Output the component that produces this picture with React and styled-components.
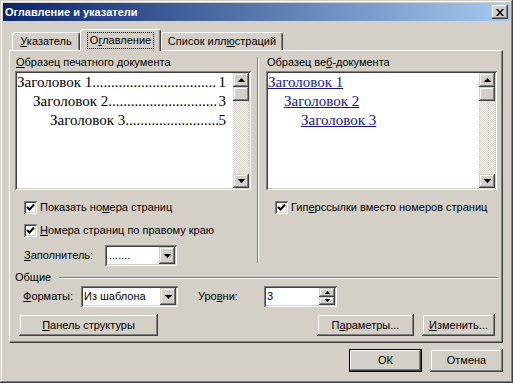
import React from "react";
import styled, { createGlobalStyle, css } from "styled-components";

const FACE = "#d4d0c8";
const SHADOW = "#808080";
const DARK = "#404040";

const GlobalStyle = createGlobalStyle`
  * { box-sizing: border-box; }
  html, body { margin: 0; padding: 0; background: ${FACE}; }
  body {
    font-family: "Liberation Sans", Arial, sans-serif;
    font-size: 11px;
    line-height: 13px;
    color: #000;
  }
`;

const raised = css`
  background: ${FACE};
  box-shadow: inset -1px -1px ${DARK}, inset 1px 1px ${FACE},
    inset -2px -2px ${SHADOW}, inset 2px 2px #fff;
`;

const raisedThin = css`
  background: ${FACE};
  box-shadow: inset -1px -1px ${DARK}, inset 1px 1px #fff,
    inset -2px -2px ${SHADOW};
`;

const sunken = css`
  background: #fff;
  box-shadow: inset 1px 1px ${SHADOW}, inset -1px -1px #fff,
    inset 2px 2px ${DARK}, inset -2px -2px ${FACE};
`;

const Window = styled.div`
  width: 513px;
  height: 383px;
  padding: 3px;
  background: ${FACE};
  box-shadow: inset -1px -1px ${DARK}, inset 1px 1px ${FACE},
    inset -2px -2px ${SHADOW}, inset 2px 2px #fff;
  display: flex;
  flex-direction: column;
`;

const TitleBar = styled.div`
  height: 18px;
  display: flex;
  align-items: center;
  justify-content: space-between;
  padding: 0 2px 0 2px;
  background: linear-gradient(to right, #0a246a, #a6caf0);
  color: #fff;
  font-weight: bold;
`;

const CloseButton = styled.div`
  width: 16px;
  height: 14px;
  ${raisedThin}
  display: flex;
  align-items: center;
  justify-content: center;
  padding-right: 1px;
`;

const Content = styled.div`
  flex: 1;
  display: flex;
  flex-direction: column;
  padding: 8px 7px 0 6px;
`;

const TabStrip = styled.div`
  height: 21px;
  display: flex;
  align-items: flex-end;
  padding-left: 3px;
`;

const Tab = styled.div`
  position: relative;
  z-index: ${(p) => (p.$active ? 1 : 0)};
  width: ${(p) => p.$w}px;
  height: ${(p) => (p.$active ? 22 : 18)}px;
  margin-bottom: ${(p) => (p.$active ? -1 : 0)}px;
  padding-top: ${(p) => (p.$active ? 3 : 2)}px;
  background: ${FACE};
  border-top: 1px solid #fff;
  border-left: 1px solid #fff;
  border-right: 1px solid ${DARK};
  border-radius: 3px 3px 0 0;
  box-shadow: inset -1px 0 ${SHADOW};
  display: flex;
  justify-content: center;
  align-items: flex-start;
`;

const FocusText = styled.span`
  padding: 1px 2px;
  outline: 1px dotted #000;
  outline-offset: 0;
`;

const PlainText = styled.span`
  padding: 0 2px;
`;

const Panel = styled.div`
  width: 494px;
  border-top: 1px solid #fff;
  border-left: 1px solid #fff;
  border-right: 1px solid ${DARK};
  border-bottom: 1px solid ${DARK};
  box-shadow: inset -1px -1px ${SHADOW};
  display: flex;
  flex-direction: column;
  padding-bottom: 6px;
`;

const Columns = styled.div`
  height: 216px;
  display: flex;
`;

const Column = styled.div`
  width: ${(p) => (p.$w ? `${p.$w}px` : "auto")};
  flex: ${(p) => (p.$w ? "none" : 1)};
  padding: 5px 0 0 ${(p) => p.$pl}px;
  display: flex;
  flex-direction: column;
`;

const VDivider = styled.div`
  width: 2px;
  margin: 6px 0 4px;
  border-left: 1px solid ${SHADOW};
  border-right: 1px solid #fff;
`;

const GroupLabel = styled.div`
  height: 13px;
  padding-left: 1px;
  margin-bottom: 2px;
`;

const PreviewBox = styled.div`
  width: ${(p) => p.$w}px;
  height: 119px;
  padding: 2px;
  ${sunken}
  display: flex;
`;

const PreviewContent = styled.div`
  flex: 1;
  min-width: 0;
  overflow: hidden;
  font-family: "Liberation Serif", "Times New Roman", serif;
  font-size: 15px;
  line-height: 19px;
`;

const TocRow = styled.div`
  display: flex;
  padding-left: ${(p) => p.$indent}px;
  padding-right: 7px;
  white-space: nowrap;
`;

const Leader = styled.span`
  flex: 1;
  min-width: 0;
  overflow: hidden;
`;

const WebRow = styled.div`
  padding-left: ${(p) => p.$indent}px;
  white-space: nowrap;
`;

const Link = styled.span`
  color: #14148c;
  text-decoration: underline;
`;

const ScrollBar = styled.div`
  width: 16px;
  display: flex;
  flex-direction: column;
`;

const ScrollBtn = styled.div`
  height: ${(p) => p.$h}px;
  ${raised}
  display: flex;
  align-items: center;
  justify-content: center;
`;

const Track = styled.div`
  flex: 1;
  background: repeating-conic-gradient(#fff 0 25%, ${FACE} 0 50%) 0 0 / 2px 2px;
`;

const CheckRow = styled.div`
  display: flex;
  align-items: center;
  gap: 3px;
  height: 13px;
  margin-top: ${(p) => p.$mt}px;
  padding-left: 9px;
  white-space: nowrap;
`;

const CheckBox = styled.div`
  width: 13px;
  height: 13px;
  flex: none;
  ${sunken}
  display: flex;
  align-items: center;
  justify-content: center;
`;

const FieldRow = styled.div`
  display: flex;
  align-items: center;
  height: 21px;
  margin-top: ${(p) => p.$mt}px;
  padding-left: ${(p) => p.$pl}px;
`;

const FieldLabel = styled.div`
  width: ${(p) => p.$w}px;
  margin-left: ${(p) => p.$ml || 0}px;
  flex: none;
  white-space: nowrap;
`;

const Combo = styled.div`
  width: ${(p) => p.$w}px;
  height: 21px;
  padding: 2px;
  ${sunken}
  display: flex;
`;

const ComboText = styled.div`
  flex: 1;
  padding-left: ${(p) => p.$pl ?? 1}px;
  display: flex;
  align-items: center;
  white-space: nowrap;
  overflow: hidden;
`;

const DropBtn = styled.div`
  width: 16px;
  ${raised}
  display: flex;
  align-items: center;
  justify-content: center;
`;

const SpinButtons = styled.div`
  width: 16px;
  display: flex;
  flex-direction: column;
`;

const SpinBtn = styled.div`
  flex: 1;
  ${raised}
  display: flex;
  align-items: center;
  justify-content: center;
`;

const GroupHeader = styled.div`
  height: 13px;
  margin-top: 4px;
  display: flex;
  align-items: center;
  padding-left: 5px;
`;

const HLine = styled.div`
  flex: 1;
  height: 2px;
  margin: 0 4px 0 8px;
  border-top: 1px solid ${SHADOW};
  border-bottom: 1px solid #fff;
`;

const ButtonRow = styled.div`
  display: flex;
  align-items: center;
  gap: 8px;
  margin-top: ${(p) => p.$mt}px;
  padding: ${(p) => p.$pad};
  justify-content: ${(p) => p.$justify || "flex-start"};
`;

const Spacer = styled.div`
  flex: 1;
`;

const Button = styled.button`
  width: ${(p) => p.$w}px;
  height: ${(p) => p.$h}px;
  font: inherit;
  color: #000;
  border: 0;
  padding: 0;
  margin: 0;
  ${raised}
  ${(p) =>
    p.$default &&
    css`
      box-shadow: inset 0 0 0 1px #000, inset -2px -2px ${DARK},
        inset 2px 2px #fff, inset -3px -3px ${SHADOW};
    `}
  display: flex;
  align-items: center;
  justify-content: center;
  white-space: nowrap;
`;

const Key = styled.span`
  text-decoration: underline;
`;

function Acc({ text }) {
  const i = text.indexOf("&");
  if (i < 0) return text;
  return (
    <>
      {text.slice(0, i)}
      <Key>{text[i + 1]}</Key>
      {text.slice(i + 2)}
    </>
  );
}

const ArrowDown = () => (
  <svg width="7" height="4" viewBox="0 0 7 4" shapeRendering="crispEdges">
    <path d="M0 0h7L3.5 4z" fill="#000" />
  </svg>
);
const ArrowUp = () => (
  <svg width="7" height="4" viewBox="0 0 7 4" shapeRendering="crispEdges">
    <path d="M0 4h7L3.5 0z" fill="#000" />
  </svg>
);
const SmallDown = () => (
  <svg width="5" height="3" viewBox="0 0 5 3" shapeRendering="crispEdges">
    <path d="M0 0h5L2.5 3z" fill="#000" />
  </svg>
);
const SmallUp = () => (
  <svg width="5" height="3" viewBox="0 0 5 3" shapeRendering="crispEdges">
    <path d="M0 3h5L2.5 0z" fill="#000" />
  </svg>
);
const CheckMark = () => (
  <svg width="9" height="9" viewBox="0 0 9 9">
    <path d="M1 4l2.5 2.5L8 1.5" fill="none" stroke="#000" strokeWidth="2" />
  </svg>
);
const CloseX = () => (
  <svg width="8" height="7" viewBox="0 0 8 7">
    <path
      d="M0 0h2l2 2.4L6 0h2L5 3.5 8 7H6L4 4.6 2 7H0l3-3.5z"
      fill="#000"
    />
  </svg>
);

const Scroll = () => (
  <ScrollBar>
    <ScrollBtn $h={14}>
      <ArrowUp />
    </ScrollBtn>
    <ScrollBtn $h={14} />
    <Track />
    <ScrollBtn $h={14}>
      <ArrowDown />
    </ScrollBtn>
  </ScrollBar>
);

const toc = [
  { title: "Заголовок 1", page: "1", indent: 0, dots: 33 },
  { title: "Заголовок 2", page: "3", indent: 16, dots: 29 },
  { title: "Заголовок 3", page: "5", indent: 33, dots: 25 },
];

export default function App() {
  return (
    <>
      <GlobalStyle />
      <Window>
        <TitleBar>
          <span>Оглавление и указатели</span>
          <CloseButton>
            <CloseX />
          </CloseButton>
        </TitleBar>
        <Content>
          <TabStrip>
            <Tab $w={68}>
              <PlainText>
                <Acc text="&Указатель" />
              </PlainText>
            </Tab>
            <Tab $w={81} $active>
              <FocusText>
                <Acc text="О&главление" />
              </FocusText>
            </Tab>
            <Tab $w={122}>
              <PlainText>
                <Acc text="Список илл&юстраций" />
              </PlainText>
            </Tab>
          </TabStrip>
          <Panel>
            <Columns>
              <Column $w={247} $pl={5}>
                <GroupLabel>
                  <Acc text="&Образец печатного документа" />
                </GroupLabel>
                <PreviewBox $w={236}>
                  <PreviewContent>
                    {toc.map((r) => (
                      <TocRow key={r.title} $indent={r.indent}>
                        <span>{r.title}</span>
                        <Leader>{".".repeat(r.dots)}</Leader>
                        <span>{r.page}</span>
                      </TocRow>
                    ))}
                  </PreviewContent>
                  <Scroll />
                </PreviewBox>
                <CheckRow $mt={11}>
                  <CheckBox>
                    <CheckMark />
                  </CheckBox>
                  <span>
                    <Acc text="Показать но&мера страниц" />
                  </span>
                </CheckRow>
                <CheckRow $mt={10}>
                  <CheckBox>
                    <CheckMark />
                  </CheckBox>
                  <span>
                    <Acc text="&Номера страниц по правому краю" />
                  </span>
                </CheckRow>
                <FieldRow $mt={8} $pl={9}>
                  <FieldLabel $w={81}>
                    <Acc text="&Заполнитель:" />
                  </FieldLabel>
                  <Combo $w={72}>
                    <ComboText $pl={2}>.......</ComboText>
                    <DropBtn>
                      <ArrowDown />
                    </DropBtn>
                  </Combo>
                </FieldRow>
              </Column>
              <VDivider />
              <Column $pl={7}>
                <GroupLabel>
                  <Acc text="Образец ве&б-документа" />
                </GroupLabel>
                <PreviewBox $w={231}>
                  <PreviewContent>
                    {toc.map((r) => (
                      <WebRow key={r.title} $indent={r.indent}>
                        <Link>{r.title}</Link>
                      </WebRow>
                    ))}
                  </PreviewContent>
                  <Scroll />
                </PreviewBox>
                <CheckRow $mt={11}>
                  <CheckBox>
                    <CheckMark />
                  </CheckBox>
                  <span>
                    <Acc text="Гип&ерссылки вместо номеров страниц" />
                  </span>
                </CheckRow>
              </Column>
            </Columns>
            <GroupHeader>
              <span>Общие</span>
              <HLine />
            </GroupHeader>
            <FieldRow $mt={2} $pl={13}>
              <FieldLabel $w={58}>
                <Acc text="&Форматы:" />
              </FieldLabel>
              <Combo $w={97}>
                <ComboText>Из шаблона</ComboText>
                <DropBtn>
                  <ArrowDown />
                </DropBtn>
              </Combo>
              <FieldLabel $w={66} $ml={20}>
                <Acc text="Уро&вни:" />
              </FieldLabel>
              <Combo $w={73}>
                <ComboText>3</ComboText>
                <SpinButtons>
                  <SpinBtn>
                    <SmallUp />
                  </SpinBtn>
                  <SpinBtn>
                    <SmallDown />
                  </SpinBtn>
                </SpinButtons>
              </Combo>
            </FieldRow>
            <ButtonRow $mt={7} $pad="0 7px 0 9px">
              <Button $w={139} $h={22}>
                <Acc text="&Панель структуры" />
              </Button>
              <Spacer />
              <Button $w={97} $h={22}>
                <Acc text="П&араметры..." />
              </Button>
              <Button $w={73} $h={22}>
                <Acc text="&Изменить..." />
              </Button>
            </ButtonRow>
          </Panel>
          <ButtonRow $mt={6} $pad="0" $justify="flex-end">
            <Button $w={73} $h={23} $default>
              ОК
            </Button>
            <Button $w={73} $h={23}>
              Отмена
            </Button>
          </ButtonRow>
        </Content>
      </Window>
    </>
  );
}
